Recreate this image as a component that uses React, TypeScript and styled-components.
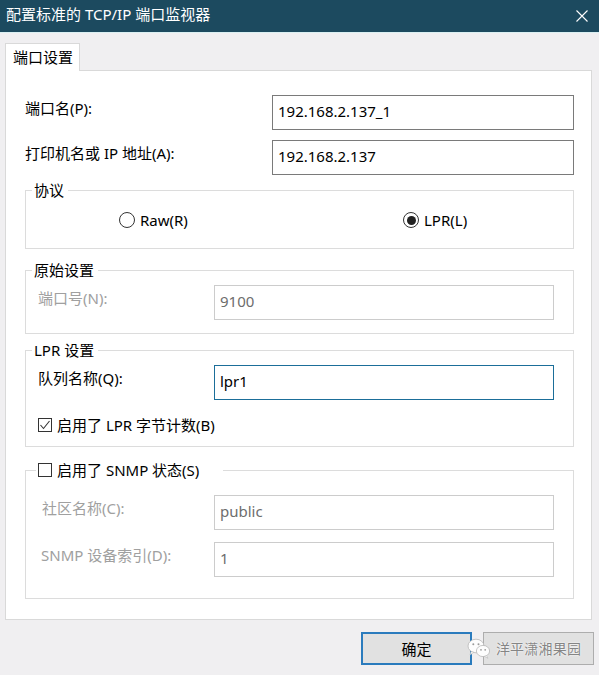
import React from "react";
import styled, { createGlobalStyle } from "styled-components";

const GlobalStyle = createGlobalStyle`
  html, body {
    margin: 0;
    padding: 0;
    background: #f0eff1;
  }
  body {
    font-family: "Noto Sans", "Noto Sans CJK SC", sans-serif;
    font-size: 15px;
    color: #000;
  }
`;

const Window = styled.div`
  width: 599px;
  height: 675px;
  display: flex;
  flex-direction: column;
  background: #f0eff1;
  overflow: hidden;
`;

const TitleBar = styled.div`
  box-sizing: border-box;
  height: 33px;
  flex: none;
  display: flex;
  align-items: center;
  justify-content: space-between;
  padding: 0 11px 4px 6px;
  background: #1c4a5f;
  border-bottom: 1px solid #dbf0f2;
  color: #fff;
  font-size: 15px;
  line-height: 20px;
`;

const CloseIcon = styled.svg`
  width: 12px;
  height: 12px;
  margin-top: 4px;
`;

const Body = styled.div`
  flex: 1;
  display: flex;
  flex-direction: column;
  padding: 10px 7px 0 5px;
`;

const TabStrip = styled.div`
  display: flex;
`;

const Tab = styled.div`
  box-sizing: border-box;
  position: relative;
  z-index: 1;
  width: 75px;
  height: 28px;
  margin-bottom: -1px;
  padding: 3px 0 0 7px;
  background: #fff;
  border: 1px solid #d9d9d9;
  border-bottom: none;
  line-height: 20px;
`;

const Panel = styled.div`
  display: flex;
  flex-direction: column;
  padding: 24px 17px 20px 19px;
  background: #fff;
  border: 1px solid #d9d9d9;
`;

const FieldRow = styled.div<{ $label: number; $gap?: number }>`
  display: grid;
  grid-template-columns: ${(p) => p.$label}px 1fr;
  align-items: start;
  margin-top: ${(p) => p.$gap ?? 0}px;
`;

const Label = styled.span<{ $disabled?: boolean; $indent?: number }>`
  padding: 3px 0 0 ${(p) => p.$indent ?? 0}px;
  line-height: 20px;
  color: ${(p) => (p.$disabled ? "#a0a0a0" : "#000")};
  white-space: nowrap;
`;

const TextBox = styled.div<{ $state?: "normal" | "disabled" | "focus" }>`
  box-sizing: border-box;
  height: 35px;
  padding: 5px 5px 0;
  line-height: 20px;
  background: #fff;
  white-space: nowrap;
  border: 1px solid
    ${(p) =>
      p.$state === "disabled" ? "#cccccc" : p.$state === "focus" ? "#1b6e99" : "#7a7a7a"};
  color: ${(p) => (p.$state === "disabled" ? "#6d6d6d" : "#000")};
`;

const Group = styled.fieldset<{ $top: number; $pt: number; $pb: number }>`
  margin: ${(p) => p.$top}px 0 0;
  padding: ${(p) => p.$pt}px 19px ${(p) => p.$pb}px 12px;
  border: 1px solid #dcdcdc;
  min-width: 0;
`;

const Legend = styled.legend<{ $shift: number; $tail: number }>`
  margin-left: ${(p) => p.$shift}px;
  padding: 0 ${(p) => p.$tail}px 0 2px;
  line-height: 20px;
  display: flex;
  align-items: center;
  gap: 5px;
`;

const RadioRow = styled.div`
  display: grid;
  grid-template-columns: 284px auto;
  padding-left: 81px;
`;

const Option = styled.label`
  display: flex;
  align-items: center;
  gap: 5px;
  line-height: 20px;
`;

const RadioDot = styled.span<{ $checked?: boolean }>`
  box-sizing: border-box;
  width: 16px;
  height: 16px;
  border-radius: 50%;
  border: 1px solid #333;
  background: #fff;
  display: flex;
  align-items: center;
  justify-content: center;
  &::after {
    content: "";
    width: 9px;
    height: 9px;
    border-radius: 50%;
    background: #222;
    display: ${(p) => (p.$checked ? "block" : "none")};
  }
`;

const CheckRow = styled.label`
  display: flex;
  align-items: center;
  gap: 5px;
  margin-top: 15px;
  line-height: 20px;
`;

const CheckBox = styled.span`
  box-sizing: border-box;
  width: 14px;
  height: 14px;
  flex: none;
  border: 1px solid #333;
  background: #fff;
  display: flex;
  align-items: center;
  justify-content: center;
`;

const Footer = styled.div`
  display: flex;
  justify-content: flex-end;
  gap: 11px;
  margin: 12px -2px 0 0;
`;

const Button = styled.div<{ $primary?: boolean }>`
  position: relative;
  box-sizing: border-box;
  width: 111px;
  height: 33px;
  display: flex;
  align-items: center;
  justify-content: center;
  background: #e1e1e1;
  border: ${(p) => (p.$primary ? "2px solid #2a7bbd" : "1px solid #adadad")};
  line-height: 20px;
`;

const Watermark = styled.span`
  font-size: 14px;
  color: #858585;
  text-shadow: 0 0 2px #fff, 0 0 1px #fff;
  letter-spacing: 0.2px;
`;

const WatermarkLogo = styled.svg`
  position: absolute;
  left: -17px;
  top: 5px;
  width: 24px;
  height: 21px;
`;

function Radio({ checked, children }: { checked?: boolean; children: React.ReactNode }) {
  return (
    <Option>
      <RadioDot $checked={checked} />
      <span>{children}</span>
    </Option>
  );
}

function Check({ checked }: { checked?: boolean }) {
  return (
    <CheckBox>
      {checked && (
        <svg width="12" height="12" viewBox="0 0 12 12">
          <polyline points="1.5,6 4.5,9.5 10.5,2" fill="none" stroke="#333" strokeWidth="1.1" />
        </svg>
      )}
    </CheckBox>
  );
}

export default function App() {
  return (
    <>
      <GlobalStyle />
      <Window>
        <TitleBar>
          <span>配置标准的 TCP/IP 端口监视器</span>
          <CloseIcon viewBox="0 0 12 12">
            <path d="M0.5 0.5 L11.5 11.5 M11.5 0.5 L0.5 11.5" stroke="#fff" strokeWidth="1.1" />
          </CloseIcon>
        </TitleBar>
        <Body>
          <TabStrip>
            <Tab>端口设置</Tab>
          </TabStrip>
          <Panel>
            <FieldRow $label={247}>
              <Label>端口名(P):</Label>
              <TextBox>192.168.2.137_1</TextBox>
            </FieldRow>
            <FieldRow $label={247} $gap={10}>
              <Label>打印机名或 IP 地址(A):</Label>
              <TextBox>192.168.2.137</TextBox>
            </FieldRow>

            <Group $top={5} $pt={10} $pb={18}>
              <Legend $shift={-6} $tail={4}>协议</Legend>
              <RadioRow>
                <Radio>Raw(R)</Radio>
                <Radio checked>LPR(L)</Radio>
              </RadioRow>
            </Group>

            <Group $top={11} $pt={5} $pb={13}>
              <Legend $shift={-6} $tail={4}>原始设置</Legend>
              <FieldRow $label={176}>
                <Label $disabled>端口号(N):</Label>
                <TextBox $state="disabled">9100</TextBox>
              </FieldRow>
            </Group>

            <Group $top={6} $pt={5} $pb={11}>
              <Legend $shift={-6} $tail={4}>LPR 设置</Legend>
              <FieldRow $label={176}>
                <Label>队列名称(Q):</Label>
                <TextBox $state="focus">lpr1</TextBox>
              </FieldRow>
              <CheckRow>
                <Check checked />
                <span>启用了 LPR 字节计数(B)</span>
              </CheckRow>
            </Group>

            <Group $top={13} $pt={15} $pb={21}>
              <Legend $shift={-2} $tail={24}>
                <Check />
                <span>启用了 SNMP 状态(S)</span>
              </Legend>
              <FieldRow $label={176}>
                <Label $disabled $indent={4}>社区名称(C):</Label>
                <TextBox $state="disabled">public</TextBox>
              </FieldRow>
              <FieldRow $label={176} $gap={12}>
                <Label $disabled $indent={3}>SNMP 设备索引(D):</Label>
                <TextBox $state="disabled">1</TextBox>
              </FieldRow>
            </Group>
          </Panel>
          <Footer>
            <Button $primary>确定</Button>
            <Button>
              <WatermarkLogo viewBox="0 0 24 21">
                <ellipse cx="9" cy="8" rx="8" ry="6.8" fill="#fdfdfd" stroke="#b8b8b8" strokeWidth="0.8" />
                <path d="M4 13.5 L3 17 L7 14.3 Z" fill="#fdfdfd" stroke="#b8b8b8" strokeWidth="0.6" />
                <circle cx="6.3" cy="6.3" r="1" fill="#9a9a9a" />
                <circle cx="11.5" cy="6.3" r="1" fill="#9a9a9a" />
                <ellipse cx="16" cy="13" rx="6.6" ry="5.6" fill="#fdfdfd" stroke="#b8b8b8" strokeWidth="0.8" />
                <path d="M19.5 17.5 L21 20.3 L17.5 18.4 Z" fill="#fdfdfd" stroke="#b8b8b8" strokeWidth="0.6" />
                <circle cx="14" cy="11.8" r="0.9" fill="#9a9a9a" />
                <circle cx="18.2" cy="11.8" r="0.9" fill="#9a9a9a" />
              </WatermarkLogo>
              <Watermark>洋平潇湘果园</Watermark>
            </Button>
          </Footer>
        </Body>
      </Window>
    </>
  );
}
